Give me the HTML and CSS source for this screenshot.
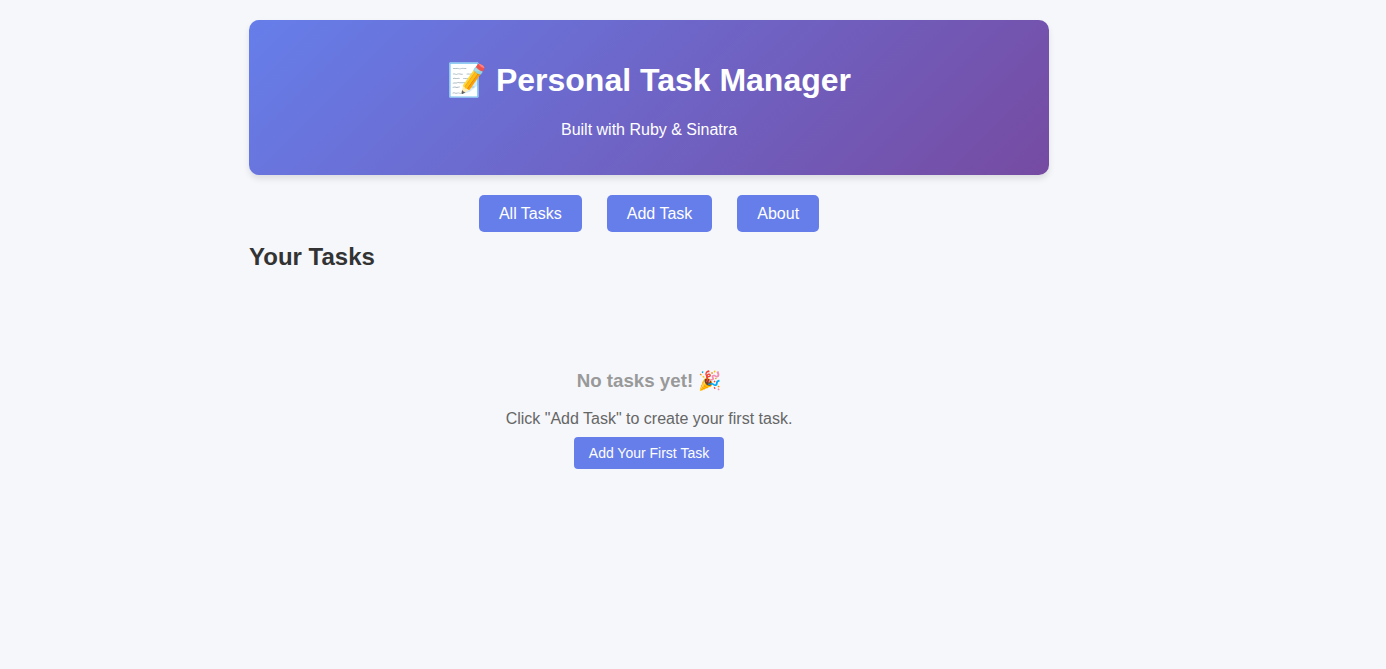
FILE: index.html
```html
<!DOCTYPE html>
<html lang="en">
<head>
  <meta charset="utf-8">
  <meta name="viewport" content="width=device-width, initial-scale=1">
  <title>Personal Task Manager</title>
  <link rel="stylesheet" href="styles.css">
</head>
<body>
  <div class="container">
    <header class="header">
      <h1 class="header-title">📝 Personal Task Manager</h1>
      <p class="header-subtitle">Built with Ruby &amp; Sinatra</p>
    </header>
    <nav class="nav">
      <a class="nav-link" href="#tasks">All Tasks</a>
      <a class="nav-link" href="#new">Add Task</a>
      <a class="nav-link" href="#about">About</a>
    </nav>
    <main>
      <h2 class="section-title">Your Tasks</h2>
      <section class="empty-state">
        <h3 class="empty-title">No tasks yet! 🎉</h3>
        <p class="empty-text">Click "Add Task" to create your first task.</p>
        <a class="btn" href="#new">Add Your First Task</a>
      </section>
    </main>
  </div>
</body>
</html>
```

FILE: styles.css
```css
* {
  box-sizing: border-box;
}

body {
  margin: 0;
  padding: 20px 108px 20px 20px;
  background: #f5f7fb;
  color: #333;
  font-family: "Liberation Sans", Arial, sans-serif;
  font-size: 16px;
}

.container {
  max-width: 800px;
  margin: 0 auto;
}

.header {
  padding: 20px;
  border-radius: 10px;
  background: linear-gradient(135deg, #667eea 0%, #764ba2 100%);
  box-shadow: 0 4px 6px rgba(0, 0, 0, 0.1);
  color: #fff;
  text-align: center;
}

.header-title {
  margin: 21px 0;
  font-size: 32px;
  line-height: 38px;
}

.header-subtitle {
  margin: 0 0 16px;
  line-height: 19px;
}

.nav {
  display: flex;
  flex-wrap: wrap;
  justify-content: center;
  gap: 25px;
  margin-top: 20px;
}

.nav-link {
  padding: 10px 20px;
  border-radius: 5px;
  background: #667eea;
  color: #fff;
  line-height: 17px;
  text-decoration: none;
}

.section-title {
  margin: 11px 0 20px;
  font-size: 24px;
  line-height: 28px;
}

.empty-state {
  padding: 60px 20px;
  color: #666;
  text-align: center;
}

.empty-title {
  margin: 19px 0;
  color: #999;
  line-height: 21px;
}

.empty-text {
  margin: 0 0 9px;
  line-height: 18px;
}

.btn {
  display: inline-block;
  padding: 8px 15px;
  border-radius: 4px;
  background: #667eea;
  color: #fff;
  font-size: 14px;
  line-height: 16px;
  text-decoration: none;
}
```
